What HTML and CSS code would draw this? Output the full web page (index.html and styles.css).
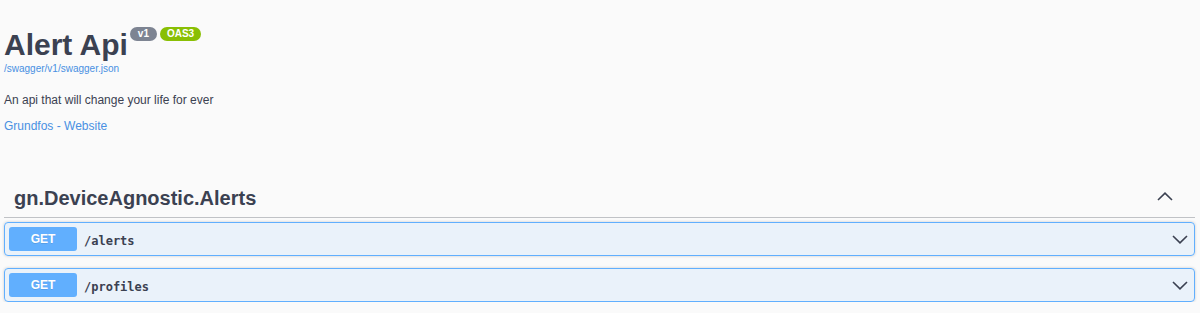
FILE: index.html
```html
<!DOCTYPE html>
<html>
<head>
<meta charset="utf-8">
<link rel="stylesheet" href="styles.css">
<title>Alert Api</title>
</head>
<body>
<div class="wrapper">
  <section class="info">
    <h2 class="title">
      <span class="title-text">Alert Api</span>
      <span class="badge badge-version">v1</span>
      <span class="badge badge-oas">OAS3</span>
    </h2>
    <a class="spec-link" href="#">/swagger/v1/swagger.json</a>
    <p class="description">An api that will change your life for ever</p>
    <a class="site-link" href="#">Grundfos - Website</a>
  </section>

  <section class="tag-section">
    <div class="tag-header">
      <h3 class="tag-name">gn.DeviceAgnostic.Alerts</h3>
      <svg class="chev-up" width="16" height="9" viewBox="0 0 16 9"><path d="M1 8 L8 1.2 L15 8" fill="none" stroke="#3b4151" stroke-width="1.6"/></svg>
    </div>
    <div class="ops">
      <div class="opblock">
        <span class="method">GET</span>
        <span class="path">/alerts</span>
        <svg class="chev-down" width="16" height="9" viewBox="0 0 16 9"><path d="M1 1 L8 7.8 L15 1" fill="none" stroke="#3b4151" stroke-width="1.6"/></svg>
      </div>
      <div class="opblock">
        <span class="method">GET</span>
        <span class="path">/profiles</span>
        <svg class="chev-down" width="16" height="9" viewBox="0 0 16 9"><path d="M1 1 L8 7.8 L15 1" fill="none" stroke="#3b4151" stroke-width="1.6"/></svg>
      </div>
    </div>
  </section>
</div>
</body>
</html>
```

FILE: styles.css
```css
html, body {
  margin: 0;
  padding: 0;
  background: #fafafa;
}

body {
  font-family: "Liberation Sans", Arial, sans-serif;
  color: #3b4151;
}

.wrapper {
  padding: 0 5px 0 4px;
}

.info {
  display: flex;
  flex-direction: column;
  align-items: flex-start;
  padding-top: 27px;
}

.title {
  margin: 0;
  display: flex;
  align-items: flex-start;
  font-size: 30px;
  font-weight: 700;
  line-height: 36px;
  color: #3b4151;
}

.title-text {
  margin-right: 2px;
}

.badge {
  height: 14px;
  line-height: 14px;
  padding: 0 7px;
  border-radius: 57px;
  color: #fff;
  font-size: 10px;
  font-weight: 700;
  font-family: "Liberation Sans", Arial, sans-serif;
  text-align: center;
}

.badge-version {
  background: #7d8492;
  min-width: 13px;
  margin-right: 3px;
}

.badge-oas {
  background: #89bf04;
}

.spec-link {
  font-size: 10px;
  line-height: 12px;
  color: #4990e2;
  text-decoration: none;
}

.description {
  margin: 18px 0 0;
  font-size: 12px;
  line-height: 15px;
  color: #3b4151;
}

.site-link {
  margin-top: 11px;
  font-size: 12px;
  line-height: 15px;
  color: #4990e2;
  text-decoration: none;
}

.tag-section {
  margin-top: 50px;
}

.tag-header {
  box-sizing: border-box;
  display: flex;
  align-items: center;
  justify-content: space-between;
  height: 34px;
  padding: 0 22px 5px 10px;
  border-bottom: 1px solid rgba(59, 65, 81, 0.3);
}

.tag-name {
  margin: 0;
  font-size: 20px;
  font-weight: 700;
  line-height: 24px;
  color: #3b4151;
}

.chev-up {
  display: block;
  margin-top: -3px;
}

.ops {
  display: flex;
  flex-direction: column;
  gap: 12px;
  padding-top: 4px;
}

.opblock {
  display: flex;
  align-items: center;
  height: 32px;
  padding: 0 5px 0 4px;
  border: 1px solid #61affe;
  border-radius: 4px;
  background: rgba(97, 175, 254, 0.1);
  box-shadow: 0 0 3px rgba(0, 0, 0, 0.19);
}

.method {
  display: flex;
  align-items: center;
  justify-content: center;
  width: 68px;
  height: 24px;
  border-radius: 3px;
  background: #61affe;
  color: #fff;
  font-size: 12px;
  font-weight: 700;
  text-shadow: 0 1px 0 rgba(0, 0, 0, 0.1);
}

.path {
  flex: 1;
  margin-left: 7px;
  padding-top: 3px;
  font-family: "DejaVu Sans Mono", "Liberation Mono", monospace;
  font-size: 12px;
  font-weight: 700;
  color: #3b4151;
}

.chev-down {
  display: block;
  margin-right: 1px;
}
```
